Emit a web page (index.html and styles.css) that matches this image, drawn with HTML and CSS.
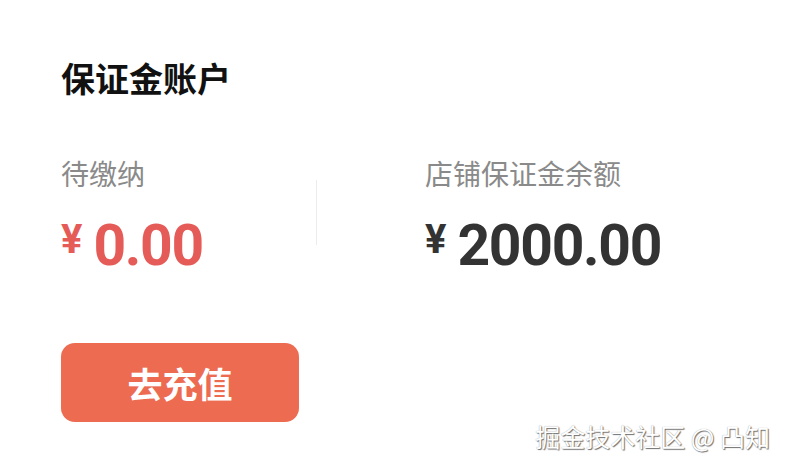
FILE: index.html
```html
<!DOCTYPE html>
<html lang="zh">
<head>
<meta charset="utf-8">
<link rel="stylesheet" href="styles.css">
</head>
<body>
<div class="page">
  <h1 class="title">保证金账户</h1>
  <div class="stats">
    <div class="stat stat-left">
      <div class="label">待缴纳</div>
      <div class="amount red"><span class="yen">¥</span><span class="num">0.00</span></div>
    </div>
    <div class="divider"></div>
    <div class="stat stat-right">
      <div class="label">店铺保证金余额</div>
      <div class="amount dark"><span class="yen">¥</span><span class="num">2000.00</span></div>
    </div>
  </div>
  <button class="btn">去充值</button>
  <div class="watermark">掘金技术社区 @ 凸知</div>
</div>
</body>
</html>
```
FILE: styles.css
```css
html, body {
  margin: 0;
  padding: 0;
  background: #ffffff;
}
body {
  width: 786px;
  height: 466px;
  overflow: hidden;
  font-family: "Noto Sans CJK SC", "Noto Sans", sans-serif;
}
.page {
  position: relative;
  width: 786px;
  height: 466px;
  padding: 55px 0 0 61px;
  box-sizing: border-box;
}
.title {
  margin: 0;
  font-size: 34px;
  line-height: 46px;
  font-weight: 700;
  color: #111;
}
.stats {
  display: flex;
  align-items: flex-start;
  margin-top: 53px;
}
.stat {
  display: flex;
  flex-direction: column;
}
.stat-left {
  width: 255px;
}
.stat-right {
  padding-left: 108px;
}
.divider {
  width: 1px;
  height: 65px;
  background: #ececec;
  margin-top: 26px;
}
.label {
  font-size: 28px;
  line-height: 38px;
  color: #8a8a8a;
}
.amount {
  display: flex;
  align-items: flex-start;
  margin-top: 24px;
  font-family: Roboto, "Liberation Sans", sans-serif;
  font-weight: 700;
}
.yen {
  font-size: 40px;
  line-height: 48px;
  margin-right: 11px;
}
.num {
  font-size: 57px;
  line-height: 60px;
  letter-spacing: -1.3px;
}
.red { color: #e55b58; }
.dark { color: #333333; }
.btn {
  display: block;
  margin-top: 67px;
  width: 238px;
  height: 79px;
  border: none;
  border-radius: 14px;
  background: #ec6b51;
  color: #ffffff;
  font-family: "Noto Sans CJK SC", sans-serif;
  font-size: 35px;
  font-weight: 700;
  padding: 0;
}
.watermark {
  position: absolute;
  right: 16px;
  bottom: 17px;
  font-size: 25px;
  line-height: 25px;
  color: #ffffff;
  text-shadow: 1px 1px 1px #6f6f6f, 0 0 1px #9a9a9a;
}
```
